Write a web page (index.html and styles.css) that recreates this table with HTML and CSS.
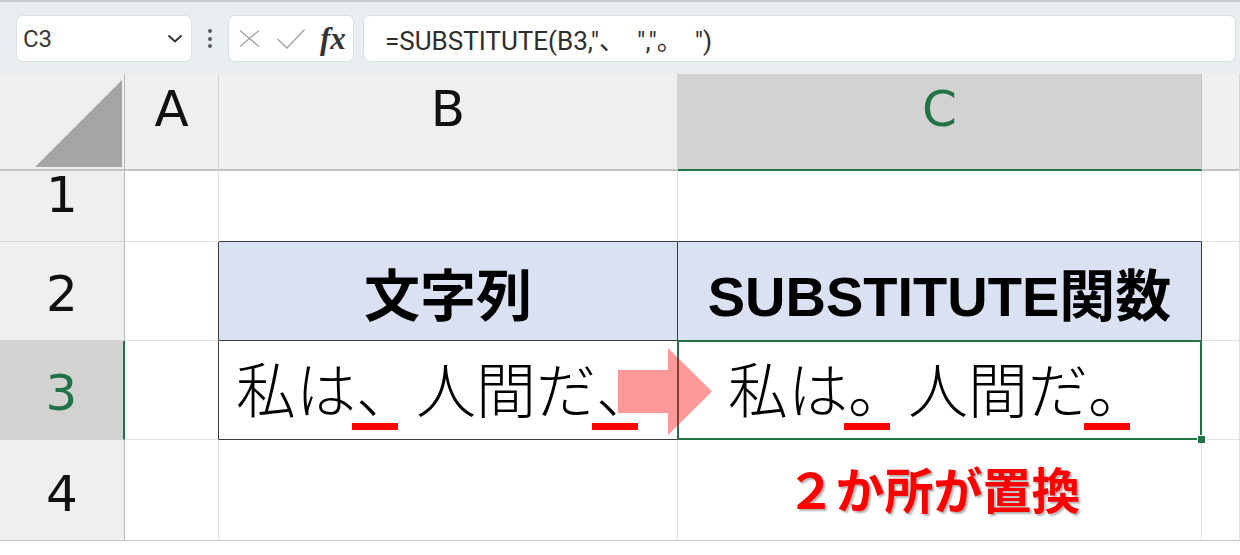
FILE: index.html
```html
<!DOCTYPE html>
<html lang="ja">
<head>
<meta charset="utf-8">
<title>SUBSTITUTE</title>
<link rel="stylesheet" href="styles.css">
</head>
<body>
<div class="app">
  <div class="toolbar">
    <div class="namebox">
      <span class="name">C3</span>
      <svg class="chev" width="16" height="9" viewBox="0 0 16 9"><polyline points="1.5,1.5 8,7.5 14.5,1.5" fill="none" stroke="#333" stroke-width="2"/></svg>
    </div>
    <div class="dots"><i></i><i></i><i></i></div>
    <div class="fnbox">
      <svg class="ic-x" width="21" height="17" viewBox="0 0 21 17"><path d="M1 0.5 L20 16.5 M20 0.5 L1 16.5" stroke="#a9a9a9" stroke-width="1.5" fill="none"/></svg>
      <svg class="ic-ok" width="28" height="20" viewBox="0 0 28 20"><polyline points="0.5,10 10,19 27.5,0.5" fill="none" stroke="#a9a9a9" stroke-width="1.5"/></svg>
      <span class="fx">fx</span>
    </div>
    <div class="formula"><span class="ftext">=SUBSTITUTE(B3,"<span class="fw">、</span>","<span class="fw">。</span>")</span></div>
  </div>

  <div class="sheet">
    <div class="corner"><svg width="124" height="95" viewBox="0 0 124 95"><polygon points="35,93 122,6 122,93" fill="#a5a5a5"/></svg></div>
    <div class="colhead">A</div>
    <div class="colhead">B</div>
    <div class="colhead sel">C</div>
    <div class="colhead last"></div>

    <div class="rowhead">1</div>
    <div class="cell"></div>
    <div class="cell above"></div>
    <div class="cell above"></div>
    <div class="cell"></div>

    <div class="rowhead">2</div>
    <div class="cell leftof"></div>
    <div class="cell tbl thead">文字列</div>
    <div class="cell tbl thead">SUBSTITUTE関数</div>
    <div class="cell"></div>

    <div class="rowhead sel">3</div>
    <div class="cell leftof"></div>
    <div class="cell tbl tval src">
      <span class="jp">私は<span class="mark">、</span>人間だ<span class="mark">、</span></span>
      <svg class="arrow" width="94" height="87" viewBox="0 0 94 87"><polygon points="0,22 50,22 50,0 94,43.5 50,87 50,65 0,65" fill="rgba(255,0,0,0.4)"/></svg>
    </div>
    <div class="cell tbl tval active">
      <span class="jp">私は<span class="mark">。</span>人間だ<span class="mark">。</span></span>
    </div>
    <div class="cell"></div>

    <div class="rowhead bottom">4</div>
    <div class="cell bottom"></div>
    <div class="cell bottom"></div>
    <div class="cell bottom note">２か所が置換</div>
    <div class="cell bottom"></div>
  </div>
</div>
</body>
</html>
```

FILE: styles.css
```css
html, body {
  margin: 0;
  padding: 0;
  background: #ffffff;
}

.app {
  width: 1240px;
  height: 555px;
  overflow: hidden;
  background: #ffffff;
}

/* ---------- formula bar ---------- */
.toolbar {
  box-sizing: border-box;
  height: 74px;
  background: #e8edf0;
  border-top: 2px solid #c6cacd;
  display: flex;
  align-items: flex-start;
  padding: 13px 4px 0 16px;
}

.namebox {
  box-sizing: border-box;
  width: 176px;
  height: 47px;
  background: #ffffff;
  border: 1px solid #dadfe2;
  border-radius: 7px;
  display: flex;
  align-items: center;
  justify-content: space-between;
  padding: 0 8px 0 6px;
}

.name {
  font-family: Roboto, "Liberation Sans", sans-serif;
  font-size: 24px;
  color: #3a3a3a;
}

.chev {
  display: block;
}

.dots {
  width: 36px;
  height: 47px;
  display: flex;
  flex-direction: column;
  align-items: center;
  justify-content: center;
  gap: 3.5px;
}

.dots i {
  display: block;
  width: 4px;
  height: 4px;
  border-radius: 50%;
  background: #5a5a5a;
}

.fnbox {
  box-sizing: border-box;
  width: 126px;
  height: 47px;
  background: #ffffff;
  border: 1px solid #dadfe2;
  border-radius: 7px;
  display: flex;
  align-items: center;
  padding-left: 10px;
}

.ic-x { display: block; }
.ic-ok { display: block; margin-left: 17px; }

.fx {
  margin-left: 15px;
  font-family: "Liberation Serif", serif;
  font-style: italic;
  font-weight: bold;
  font-size: 31px;
  color: #333333;
  line-height: 1;
}

.formula {
  box-sizing: border-box;
  flex: 1;
  height: 47px;
  margin-left: 9px;
  background: #ffffff;
  border: 1px solid #dadfe2;
  border-radius: 7px;
  display: flex;
  align-items: center;
  padding-left: 21px;
}

.ftext {
  font-family: Roboto, "Liberation Sans", "Noto Sans CJK JP", sans-serif;
  font-size: 26px;
  color: #2e2e2e;
  white-space: pre;
}

.fw {
  font-family: "Noto Sans CJK JP", sans-serif;
  margin-right: 12px;
}

/* ---------- sheet ---------- */
.sheet {
  display: grid;
  grid-template-columns: 125px 94px 459px 524px 38px;
  grid-template-rows: 97px 71px 99px 99px 101px;
}

.sheet > div {
  box-sizing: border-box;
  border-right: 1px solid #e1e1e1;
  border-bottom: 1px solid #e1e1e1;
}

.corner {
  background: #efefef;
  border-right-color: #b9b9b9 !important;
  border-bottom: 2px solid #c4c4c4 !important;
}

.corner svg { display: block; }

.colhead {
  background: #efefef;
  border-right-color: #d4d4d4 !important;
  border-bottom: 2px solid #c4c4c4 !important;
  font-family: "DejaVu Sans", sans-serif;
  font-size: 50px;
  line-height: 50px;
  text-align: center;
  padding-top: 10px;
  color: #111111;
}

.colhead.sel {
  background: #d2d2d2;
  color: #217346;
  border-bottom-color: #217346 !important;
  border-right-color: #c4c4c4 !important;
}

.rowhead {
  background: #efefef;
  border-right-color: #b9b9b9 !important;
  border-bottom-color: #d4d4d4 !important;
  display: flex;
  align-items: flex-end;
  justify-content: center;
  padding-bottom: 21px;
  font-family: "DejaVu Sans", sans-serif;
  font-size: 50px;
  line-height: 50px;
  color: #111111;
}

.rowhead.sel {
  background: #d2d2d2;
  color: #217346;
  border-right: 2px solid #217346 !important;
}

.rowhead.bottom,
.cell.bottom {
  border-bottom-color: #c8c8c8 !important;
}

.cell {
  background: #ffffff;
}

.cell.above { border-bottom-color: #3a3a3a; }
.cell.leftof { border-right-color: #3a3a3a; }

.cell.tbl {
  border-right-color: #3a3a3a;
  border-bottom-color: #3a3a3a;
}

.thead {
  background: #d9e1f2 !important;
  display: flex;
  align-items: center;
  justify-content: center;
  font-family: "Liberation Sans", "Noto Sans CJK JP", sans-serif;
  font-weight: bold;
  font-size: 56px;
  color: #000000;
}

.tval {
  position: relative;
  display: flex;
  align-items: center;
}

.src { padding-left: 17px; }
.active { padding-left: 50px; }

.jp {
  font-family: "Noto Sans CJK JP", sans-serif;
  font-weight: 300;
  font-size: 60px;
  line-height: 60px;
  color: #000000;
  white-space: nowrap;
  margin-top: -6px;
}

.mark {
  position: relative;
  display: inline-block;
  height: 60px;
}

.mark::after {
  content: "";
  position: absolute;
  left: -4px;
  top: 66px;
  width: 46px;
  height: 7px;
  background: #ff0000;
}

.arrow {
  position: absolute;
  left: 399px;
  top: 7px;
  z-index: 3;
}

.active::before {
  content: "";
  position: absolute;
  top: -1px;
  left: -1px;
  right: -1px;
  bottom: -1px;
  border: 2px solid #217346;
  z-index: 1;
}

.active::after {
  content: "";
  position: absolute;
  right: -4px;
  bottom: -4px;
  width: 7px;
  height: 7px;
  background: #217346;
  box-shadow: 0 0 0 1px #ffffff;
  z-index: 2;
}

.note {
  display: flex;
  align-items: center;
  justify-content: center;
  padding: 0 12px 6px 0;
  font-family: "Noto Sans CJK JP", sans-serif;
  font-weight: bold;
  font-size: 49px;
  color: #ff0000;
  text-shadow: 2px 2px 2px rgba(0, 0, 0, 0.3);
}
```
